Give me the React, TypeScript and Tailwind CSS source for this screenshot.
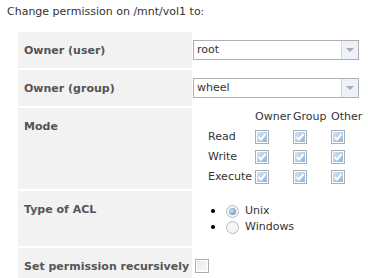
import React from "react";

const Check: React.FC<{ checked?: boolean }> = ({ checked = true }) => (
  <svg width="14" height="14" viewBox="0 0 14 14" className="block">
    <defs>
      <linearGradient id="cbfill" x1="0" y1="0" x2="1" y2="1">
        <stop offset="0" stopColor="#d6e6f5" />
        <stop offset="1" stopColor="#8db4da" />
      </linearGradient>
      <linearGradient id="cbempty" x1="0" y1="0" x2="1" y2="1">
        <stop offset="0" stopColor="#e4e6ea" />
        <stop offset="1" stopColor="#fbfbfc" />
      </linearGradient>
    </defs>
    <rect x="0.5" y="0.5" width="13" height="13" fill="#fff" stroke="#a8aeb5" />
    <rect x="2" y="2" width="10" height="10" fill={checked ? "url(#cbfill)" : "url(#cbempty)"} />
    {checked && (
      <path d="M3.5 7 L6 9.5 L10.5 4" fill="none" stroke="#ffffff" strokeWidth="2" />
    )}
  </svg>
);

const Radio: React.FC<{ checked?: boolean }> = ({ checked }) => (
  <svg width="13" height="13" viewBox="0 0 13 13" className="block">
    <defs>
      <radialGradient id="rdon" cx="0.4" cy="0.4" r="0.6">
        <stop offset="0" stopColor="#cfe2f5" />
        <stop offset="1" stopColor="#6f9ccb" />
      </radialGradient>
    </defs>
    <circle cx="6.5" cy="6.5" r="6" fill="#f4f5f6" stroke="#b4b9bf" />
    {checked && <circle cx="6.5" cy="6.5" r="3.5" fill="url(#rdon)" />}
  </svg>
);

const Select: React.FC<{ value: string }> = ({ value }) => (
  <div className="flex h-[20px] w-[166px] border border-[#abb1b8] bg-white">
    <div className="flex-1 pl-[3px] leading-[18px]">{value}</div>
    <div className="flex w-[17px] items-center justify-center border-l border-[#d3d7dc] bg-[#eef1f5]">
      <span className="h-0 w-0 border-x-[4px] border-t-[4px] border-x-transparent border-t-[#a3abb6]" />
    </div>
  </div>
);

const Row: React.FC<{ label: string; h: string; children: React.ReactNode; top?: boolean }> = ({
  label,
  h,
  children,
  top,
}) => (
  <div className={`flex ${h}`}>
    <div className="w-[174px] shrink-0 bg-[#f2f2f2] pl-[6px] pt-[11px] font-bold text-[#555]">{label}</div>
    <div className={`flex flex-1 pl-[1px] ${top ? "items-start" : "items-center"}`}>{children}</div>
  </div>
);

export default function App() {
  return (
    <div className="h-[278px] w-[368px] overflow-hidden bg-white text-[11px] text-[#333]" style={{ fontFamily: '"DejaVu Sans", Verdana, sans-serif' }}>
      <div className="pl-[7px] pt-[5px] leading-[14px]">Change permission on /mnt/vol1 to:</div>
      <div className="ml-[18px] mt-[13px] flex w-[342px] flex-col gap-[2px]">
        <Row label="Owner (user)" h="h-[36px]">
          <Select value="root" />
        </Row>
        <Row label="Owner (group)" h="h-[36px]">
          <Select value="wheel" />
        </Row>
        <Row label="Mode" h="h-[81px]" top>
          <div className="ml-[15px] -mt-[1px] grid grid-cols-[47px_38px_38px_auto] auto-rows-[20px] items-center">
            <span />
            <span>Owner</span>
            <span>Group</span>
            <span>Other</span>
            {["Read", "Write", "Execute"].map((r) => (
              <React.Fragment key={r}>
                <span className="whitespace-nowrap">{r}</span>
                <Check />
                <Check />
                <Check />
              </React.Fragment>
            ))}
          </div>
        </Row>
        <Row label="Type of ACL" h="h-[55px]" top>
          <ul className="ml-[18px] mt-[12px] flex flex-col">
            {[
              ["Unix", true],
              ["Windows", false],
            ].map(([t, c]) => (
              <li key={t as string} className="flex h-[16px] items-center gap-[6px]">
                <span className="mr-[5px] h-[4px] w-[4px] rounded-full bg-black" />
                <Radio checked={c as boolean} />
                <span>{t as string}</span>
              </li>
            ))}
          </ul>
        </Row>
        <Row label="Set permission recursively" h="h-[36px]" top>
          <div className="mt-[11px] pl-[2px]">
            <Check checked={false} />
          </div>
        </Row>
      </div>
    </div>
  );
}
